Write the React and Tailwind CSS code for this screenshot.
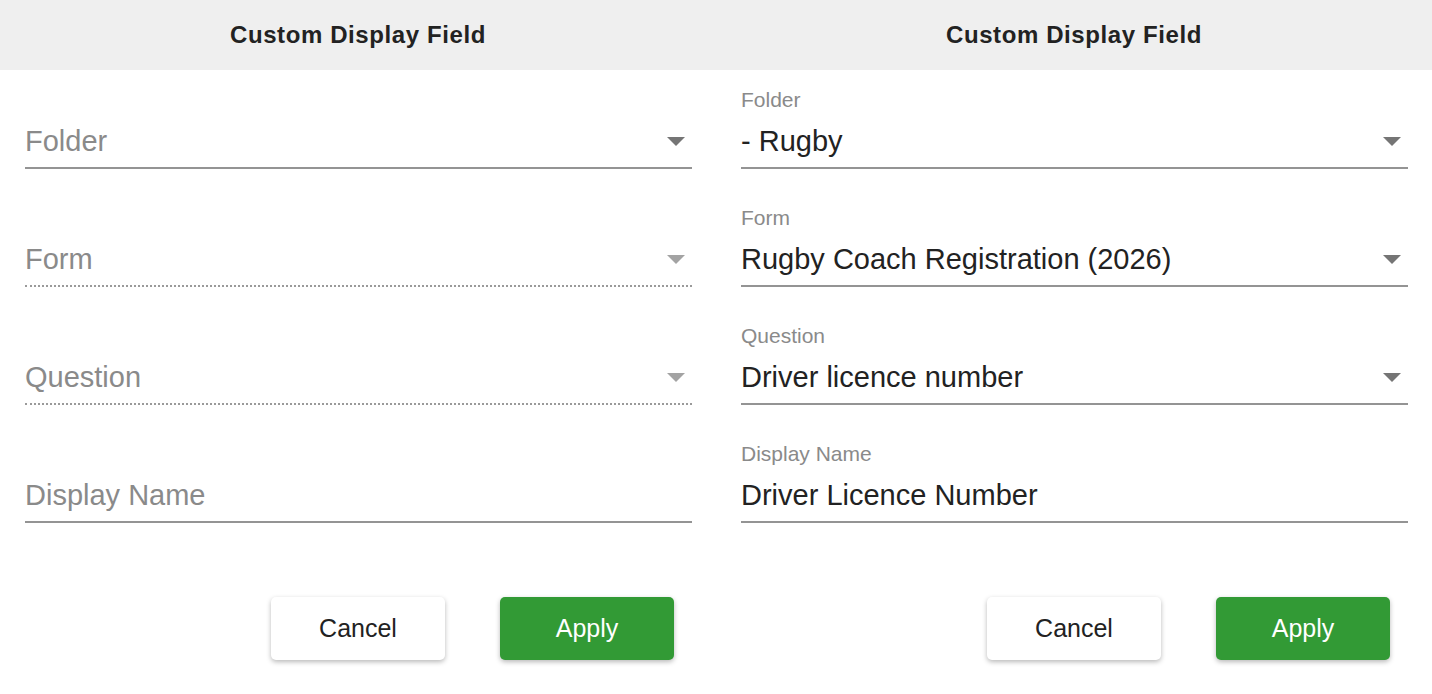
import React from "react";

const fields = ["Folder", "Form", "Question", "Display Name"];

function Caret({ muted }) {
  return (
    <svg width="18" height="9" viewBox="0 0 18 9" className="shrink-0">
      <path d="M0 0h18L9 9z" fill={muted ? "#a3a3a3" : "#757575"} />
    </svg>
  );
}

function Field({ label, value, select, disabled }) {
  const filled = value != null;
  return (
    <div className="flex flex-col">
      <div className="h-[24px] text-[21px] leading-[24px] text-[#8a8a8a]">
        {filled ? label : ""}
      </div>
      <div
        className={
          "flex items-center h-[57px] pt-[12px] pb-[9px] pr-[7px] border-b-2 " +
          (disabled ? "border-dotted border-[#9a9a9a]" : "border-solid border-[#949494]")
        }
      >
        <span
          className={
            "flex-1 text-[29px] leading-[34px] " +
            (filled ? "text-[#222]" : "text-[#8a8a8a]")
          }
        >
          {filled ? value : label}
        </span>
        {select && <Caret muted={disabled} />}
      </div>
    </div>
  );
}

function Panel({ values }) {
  const filled = Boolean(values);
  return (
    <div className="flex-1 flex flex-col bg-white">
      <div className="h-[70px] bg-[#efefef] flex items-center justify-center">
        <h2 className="text-[24px] font-bold text-[#222] tracking-[0.6px]">
          Custom Display Field
        </h2>
      </div>
      <div className="pl-[25px] pr-6 pt-[18px] flex flex-col gap-[37px]">
        {fields.map((f, i) => (
          <Field
            key={f}
            label={f}
            value={filled ? values[i] : null}
            select={i < 3}
            disabled={!filled && (i === 1 || i === 2)}
          />
        ))}
      </div>
      <div className="flex justify-end gap-[55px] pr-[42px] pt-[74px]">
        <button className="w-[174px] h-[63px] rounded-[5px] bg-white text-[25px] text-[#222] shadow-[0_2px_5px_rgba(0,0,0,0.28)]">
          Cancel
        </button>
        <button className="w-[174px] h-[63px] rounded-[5px] bg-[#329a35] text-[25px] text-white shadow-[0_2px_5px_rgba(0,0,0,0.28)]">
          Apply
        </button>
      </div>
    </div>
  );
}

export default function App() {
  return (
    <div
      className="w-[1432px] h-[694px] flex bg-white overflow-hidden"
      style={{ fontFamily: '"Liberation Sans", Arial, sans-serif' }}
    >
      <Panel />
      <Panel
        values={[
          "- Rugby",
          "Rugby Coach Registration (2026)",
          "Driver licence number",
          "Driver Licence Number",
        ]}
      />
    </div>
  );
}
